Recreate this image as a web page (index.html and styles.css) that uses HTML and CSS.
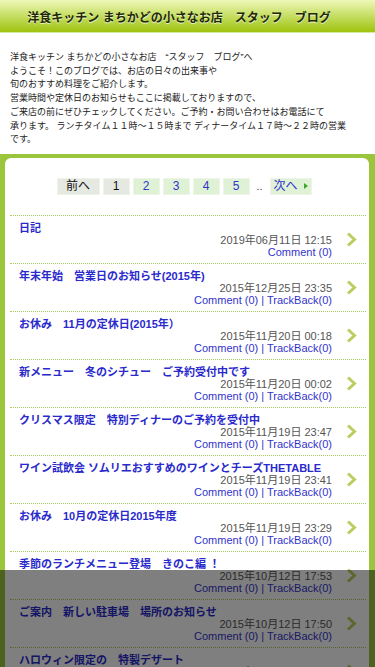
FILE: index.html
```html
<!DOCTYPE html>
<html lang="ja">
<head>
    <meta charset="UTF-8">
    <meta name="viewport" content="width=device-width, initial-scale=1.0">
    <title>スタッフ ブログ</title>
    <link rel="stylesheet" href="styles.css">
</head>
<body>

    <header>
        <h1>洋食キッチン まちかどの小さなお店　スタッフ　ブログ</h1>
    </header>

    <p class="intro">
        洋食キッチン まちかどの小さなお店　“スタッフ　ブログ”へ<br>
        ようこそ！このブログでは、お店の日々の出来事や<br>
        旬のおすすめ料理をご紹介します。<br>
        営業時間や定休日のお知らせもここに掲載しておりますので、<br>
        ご来店の前にぜひチェックしてください。ご予約・お問い合わせはお電話にて<br>
        承ります。 ランチタイム１１時～１５時まで ディナータイム１７時～２２時の営業<br>
        です。
    </p>

    <main>
        <div class="box">
            <div class="pager">
                <span class="page off">前へ</span>
                <span class="page off">1</span>
                <a href="#" class="page">2</a>
                <a href="#" class="page">3</a>
                <a href="#" class="page">4</a>
                <a href="#" class="page">5</a>
                <span class="dots">..</span>
                <a href="#" class="page next">次へ<svg width="4" height="6" viewBox="0 0 4 6"><path d="M0 0 L4 3 L0 6 Z" fill="#3fa72c"/></svg></a>
            </div>

            <ul class="entries">
                <li>
                    <div class="entry-body">
                        <a href="#" class="entry-title">日記</a>
                        <div class="entry-date">2019年06月11日 12:15</div>
                        <div class="entry-meta"><a href="#">Comment (0)</a></div>
                    </div>
                    <svg class="chevron" width="11" height="15" viewBox="0 0 11 15"><polyline points="2,1.5 8.5,7.5 2,13.5" fill="none" stroke="#b8cf5f" stroke-width="3"/></svg>
                </li>
                <li>
                    <div class="entry-body">
                        <a href="#" class="entry-title">年末年始　営業日のお知らせ(2015年)</a>
                        <div class="entry-date">2015年12月25日 23:35</div>
                        <div class="entry-meta"><a href="#">Comment (0)</a> | <a href="#">TrackBack(0)</a></div>
                    </div>
                    <svg class="chevron" width="11" height="15" viewBox="0 0 11 15"><polyline points="2,1.5 8.5,7.5 2,13.5" fill="none" stroke="#b8cf5f" stroke-width="3"/></svg>
                </li>
                <li>
                    <div class="entry-body">
                        <a href="#" class="entry-title">お休み　11月の定休日(2015年）</a>
                        <div class="entry-date">2015年11月20日 00:18</div>
                        <div class="entry-meta"><a href="#">Comment (0)</a> | <a href="#">TrackBack(0)</a></div>
                    </div>
                    <svg class="chevron" width="11" height="15" viewBox="0 0 11 15"><polyline points="2,1.5 8.5,7.5 2,13.5" fill="none" stroke="#b8cf5f" stroke-width="3"/></svg>
                </li>
                <li>
                    <div class="entry-body">
                        <a href="#" class="entry-title">新メニュー　冬のシチュー　ご予約受付中です</a>
                        <div class="entry-date">2015年11月20日 00:02</div>
                        <div class="entry-meta"><a href="#">Comment (0)</a> | <a href="#">TrackBack(0)</a></div>
                    </div>
                    <svg class="chevron" width="11" height="15" viewBox="0 0 11 15"><polyline points="2,1.5 8.5,7.5 2,13.5" fill="none" stroke="#b8cf5f" stroke-width="3"/></svg>
                </li>
                <li>
                    <div class="entry-body">
                        <a href="#" class="entry-title">クリスマス限定　特別ディナーのご予約を受付中</a>
                        <div class="entry-date">2015年11月19日 23:47</div>
                        <div class="entry-meta"><a href="#">Comment (0)</a> | <a href="#">TrackBack(0)</a></div>
                    </div>
                    <svg class="chevron" width="11" height="15" viewBox="0 0 11 15"><polyline points="2,1.5 8.5,7.5 2,13.5" fill="none" stroke="#b8cf5f" stroke-width="3"/></svg>
                </li>
                <li>
                    <div class="entry-body">
                        <a href="#" class="entry-title">ワイン試飲会 ソムリエおすすめのワインとチーズTHETABLE</a>
                        <div class="entry-date">2015年11月19日 23:41</div>
                        <div class="entry-meta"><a href="#">Comment (0)</a> | <a href="#">TrackBack(0)</a></div>
                    </div>
                    <svg class="chevron" width="11" height="15" viewBox="0 0 11 15"><polyline points="2,1.5 8.5,7.5 2,13.5" fill="none" stroke="#b8cf5f" stroke-width="3"/></svg>
                </li>
                <li>
                    <div class="entry-body">
                        <a href="#" class="entry-title">お休み　10月の定休日2015年度</a>
                        <div class="entry-date">2015年11月19日 23:29</div>
                        <div class="entry-meta"><a href="#">Comment (0)</a> | <a href="#">TrackBack(0)</a></div>
                    </div>
                    <svg class="chevron" width="11" height="15" viewBox="0 0 11 15"><polyline points="2,1.5 8.5,7.5 2,13.5" fill="none" stroke="#b8cf5f" stroke-width="3"/></svg>
                </li>
                <li>
                    <div class="entry-body">
                        <a href="#" class="entry-title">季節のランチメニュー登場　きのこ編 ！</a>
                        <div class="entry-date">2015年10月12日 17:53</div>
                        <div class="entry-meta"><a href="#">Comment (0)</a> | <a href="#">TrackBack(0)</a></div>
                    </div>
                    <svg class="chevron" width="11" height="15" viewBox="0 0 11 15"><polyline points="2,1.5 8.5,7.5 2,13.5" fill="none" stroke="#b8cf5f" stroke-width="3"/></svg>
                </li>
                <li>
                    <div class="entry-body">
                        <a href="#" class="entry-title">ご案内　新しい駐車場　場所のお知らせ</a>
                        <div class="entry-date">2015年10月12日 17:50</div>
                        <div class="entry-meta"><a href="#">Comment (0)</a> | <a href="#">TrackBack(0)</a></div>
                    </div>
                    <svg class="chevron" width="11" height="15" viewBox="0 0 11 15"><polyline points="2,1.5 8.5,7.5 2,13.5" fill="none" stroke="#b8cf5f" stroke-width="3"/></svg>
                </li>
                <li>
                    <div class="entry-body">
                        <a href="#" class="entry-title">ハロウィン限定の　特製デザート</a>
                        <div class="entry-date">2015年10月05日 11:30</div>
                        <div class="entry-meta"><a href="#">Comment (0)</a> | <a href="#">TrackBack(0)</a></div>
                    </div>
                    <svg class="chevron" width="11" height="15" viewBox="0 0 11 15"><polyline points="2,1.5 8.5,7.5 2,13.5" fill="none" stroke="#b8cf5f" stroke-width="3"/></svg>
                </li>
            </ul>
        </div>
    </main>

    <div class="ad-shade"></div>

</body>
</html>
```

FILE: styles.css
```css
body {
    font-family: 'Liberation Sans', 'Noto Sans CJK JP', sans-serif;
    margin: 0;
    padding: 0;
    background-color: #fff;
    color: #222;
}

header {
    height: 32px;
    background: linear-gradient(#eef8b8, #9ec30e);
    border-bottom: 1px solid #d6e9a2;
    display: flex;
    align-items: center;
    justify-content: center;
    padding-right: 17px;
}

header h1 {
    margin: 0;
    font-size: 12px;
    font-weight: bold;
    color: #1e2a00;
    text-shadow: 0 1px 1px rgba(255, 255, 255, 0.8);
    white-space: nowrap;
}

.intro {
    margin: 0;
    padding: 18px 10px 7px;
    font-size: 9px;
    line-height: 13.7px;
    white-space: nowrap;
}

main {
    background-color: #9bc53d;
    padding: 4px 6px 0 5px;
}

.box {
    background-color: #fff;
    border-radius: 6px 6px 0 0;
}

.pager {
    display: flex;
    justify-content: center;
    align-items: center;
    gap: 3px;
    padding: 20px 0;
    margin-left: -6px;
    font-size: 12px;
}

.page {
    box-sizing: border-box;
    min-width: 27px;
    height: 17px;
    line-height: 15px;
    padding: 0 7px;
    text-align: center;
    border: 1px solid #eef5e8;
    background-color: #dff2d5;
    color: #3333cc;
    text-decoration: none;
    white-space: nowrap;
}

.page.off {
    background-color: #e6e9e2;
    color: #111;
}

.pager .page.off:first-child {
    width: 43px;
}

.dots {
    width: 14px;
    text-align: center;
    color: #444;
    font-size: 11px;
}

.page.next {
    display: flex;
    align-items: center;
    justify-content: center;
    gap: 6px;
    width: 42px;
    padding: 0 3px;
}

ul.entries {
    list-style: none;
    margin: 0 3px 0 5px;
    padding: 0;
    border-top: 1px dotted #a9cd5c;
}

ul.entries li {
    display: flex;
    align-items: center;
    gap: 14px;
    padding: 6px 9px 5px;
    border-bottom: 1px dotted #a9cd5c;
}

.entry-body {
    flex: 1;
    min-width: 0;
}

.entry-title {
    display: block;
    font-size: 11px;
    line-height: 12px;
    font-weight: bold;
    color: #2a2acc;
    text-decoration: none;
    white-space: nowrap;
}

.entry-date, .entry-meta {
    text-align: right;
    font-size: 11px;
    line-height: 12px;
}

.entry-date {
    color: #555;
}

.entry-meta {
    color: #3333cc;
}

.entry-meta a {
    color: #3333cc;
    text-decoration: none;
}

.chevron {
    flex: none;
}

.ad-shade {
    position: fixed;
    left: 0;
    right: 0;
    bottom: 0;
    height: 97px;
    background-color: rgba(0, 0, 0, 0.5);
    pointer-events: none;
}
```
